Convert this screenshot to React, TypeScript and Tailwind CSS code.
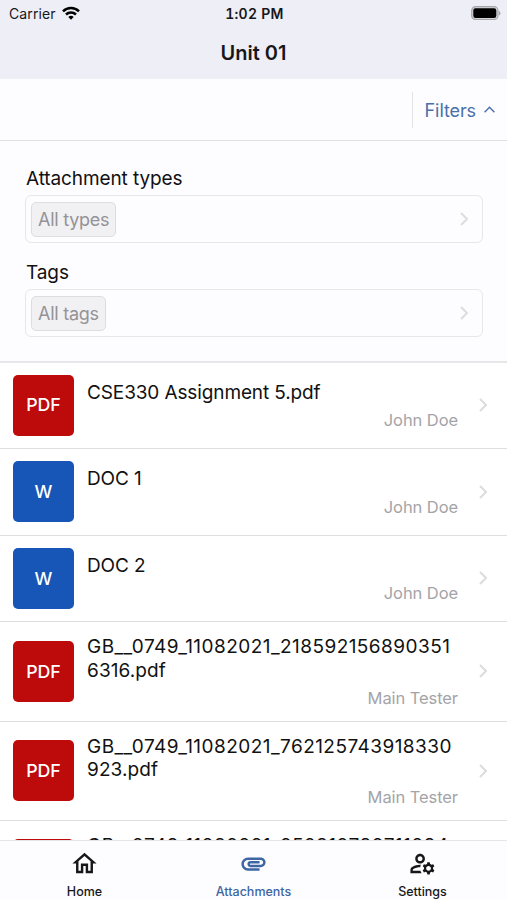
import type { ReactNode } from "react";
import { MdAttachment, MdOutlineHome, MdOutlineManageAccounts } from "react-icons/md";

type Attachment = {
  kind: "PDF" | "W";
  name: string[];
  author: string;
};

const attachments: Attachment[] = [
  { kind: "PDF", name: ["CSE330 Assignment 5.pdf"], author: "John Doe" },
  { kind: "W", name: ["DOC 1"], author: "John Doe" },
  { kind: "W", name: ["DOC 2"], author: "John Doe" },
  { kind: "PDF", name: ["GB__0749_11082021_218592156890351", "6316.pdf"], author: "Main Tester" },
  { kind: "PDF", name: ["GB__0749_11082021_762125743918330", "923.pdf"], author: "Main Tester" },
  { kind: "PDF", name: ["GB__0749_11082021_252812782711094"], author: "" },
];

function Chevron({ className }: { className?: string }) {
  return (
    <svg viewBox="0 0 8 14" className={className} fill="none" stroke="currentColor" strokeWidth="2">
      <path d="M1 1l6 6-6 6" />
    </svg>
  );
}

function StatusBar() {
  return (
    <div className="grid grid-cols-3 items-center h-[27px] pl-[9px] pr-[6px] text-[#17171b]">
      <div className="flex items-center gap-[6px]">
        <span className="text-[14px] tracking-[0.1px]">Carrier</span>
        <svg viewBox="0 0 18 14" className="w-[18px] h-[14px] -mt-px" fill="none" stroke="#000" strokeWidth="2.5">
          <path d="M1 5.3a11.5 11.5 0 0 1 16 0" />
          <path d="M4 8.5a7.2 7.2 0 0 1 10 0" />
          <path d="M6.3 11a3.9 3.9 0 0 1 5.4 0L9 13.8z" fill="#000" stroke="none" />
        </svg>
      </div>
      <span className="pr-px text-center text-[14px] tracking-[0.25px] font-semibold tabular-nums whitespace-nowrap">1:02 PM</span>
      <svg viewBox="0 0 30 14" className="w-[30px] h-[14px] justify-self-end -mt-px">
        <rect x="0.7" y="0.7" width="26.3" height="12.8" rx="3.8" fill="#d5d5d9" stroke="#a5a5aa" strokeWidth="1.2" />
        <rect x="2.3" y="2.2" width="23" height="9.8" rx="2.2" fill="#000" />
        <path d="M28 5v4.4a2.4 2.4 0 0 0 0-4.4z" fill="#a5a5aa" />
      </svg>
    </div>
  );
}

function FilterField({ label, value }: { label: string; value: string }) {
  return (
    <div>
      <div className="h-[26px] pl-px text-[19px] leading-[26px] tracking-[-0.1px] text-[#111]">{label}</div>
      <div className="mt-[3px] flex h-[48px] items-center justify-between rounded-[6px] border-[1.5px] border-[#e7e6ea] pl-[5px] pr-[14px]">
        <span className="flex h-[35px] items-center rounded-[5px] border-[1.5px] border-[#dddcdf] bg-[#f1f0f3] px-[6px] text-[18px] tracking-[-0.25px] text-[#949397]">
          {value}
        </span>
        <Chevron className="w-2 h-[14px] text-[#dddce0]" />
      </div>
    </div>
  );
}

function AttachmentRow({ item }: { item: Attachment }) {
  const long = item.name[0].length > 30;
  return (
    <li
      className={`flex shrink-0 items-center border-b-[1.5px] border-[#dededf] pl-[13px] pr-5 last:h-[98.6px] ${
        long ? "h-[99.3px]" : "h-[86.6px]"
      }`}
    >
      <div
        className={`flex size-[61px] shrink-0 items-center justify-center rounded-[5px] pt-px text-[17.8px] font-medium text-white ${
          item.kind === "PDF" ? "bg-[#bd0a0a]" : "bg-[#1755b6]"
        }`}
      >
        {item.kind}
      </div>
      <div
        className={`ml-[13px] flex w-[371px] flex-col justify-between self-stretch ${
          long ? "pt-[13px] pb-[11px]" : "pt-[18px] pb-4"
        }`}
      >
        <div className="text-[19px] leading-[23.6px] whitespace-nowrap text-[#111]">
          {item.name.map((line) => (
            <div key={line} className={line.length > 30 ? "tracking-[0.45px]" : long ? "tracking-[0.1px]" : "tracking-[-0.12px]"}>
              {line}
            </div>
          ))}
        </div>
        <div className="text-right text-[16.5px] leading-6 tracking-[-0.08px] text-[#a4a4a7]">{item.author}</div>
      </div>
      <Chevron className="ml-auto w-2 h-[14px] text-[#dcdcde]" />
    </li>
  );
}

function Tab({ label, icon, active }: { label: string; icon: ReactNode; active?: boolean }) {
  return (
    <button className={`flex flex-1 flex-col items-center pt-[8px] ${active ? "text-[#3d66a3]" : "text-[#17171a]"}`}>
      <span className="text-[29px]">{icon}</span>
      <span className="mt-[6px] text-[12.5px] leading-4 font-medium">{label}</span>
    </button>
  );
}

export default function App() {
  return (
    <div className="flex h-[900px] w-[507px] flex-col overflow-hidden bg-white font-[Inter,sans-serif]">
      <header className="h-[79px] shrink-0 bg-[#eeeef6]">
        <StatusBar />
        <h1 className="text-center text-[20px] leading-[52px] font-semibold text-[#17171b]">Unit 01</h1>
      </header>

      <div className="flex h-[62px] shrink-0 items-center justify-end border-b-[1.5px] border-[#e0dfe3] bg-[#fdfcff]">
        <button className="flex h-9 items-center gap-2 border-l border-[#e3e2e6] pl-3 pr-3 text-[18px] tracking-[-0.1px] text-[#4a70aa]">
          <span className="pt-px">Filters</span>
          <svg viewBox="0 0 11 7" className="w-[11px] h-[7px]" fill="none" stroke="currentColor" strokeWidth="1.4">
            <path d="M0.6 6.2l4.9-5 4.9 5" />
          </svg>
        </button>
      </div>

      <section className="flex h-[221.5px] shrink-0 flex-col gap-[17px] border-b-2 border-[#e7e6e9] bg-[#fdfcff] pl-[25px] pr-6 pt-[25px]">
        <FilterField label="Attachment types" value="All types" />
        <FilterField label="Tags" value="All tags" />
      </section>

      <ul className="flex min-h-0 flex-1 flex-col overflow-hidden">
        {attachments.map((item) => (
          <AttachmentRow key={item.name[0]} item={item} />
        ))}
      </ul>

      <nav className="flex h-[60px] shrink-0 border-t border-[#e6e5e9] bg-[#fdfcff]">
        <Tab label="Home" icon={<MdOutlineHome />} />
        <Tab label="Attachments" icon={<MdAttachment />} active />
        <Tab label="Settings" icon={<MdOutlineManageAccounts />} />
      </nav>
    </div>
  );
}
